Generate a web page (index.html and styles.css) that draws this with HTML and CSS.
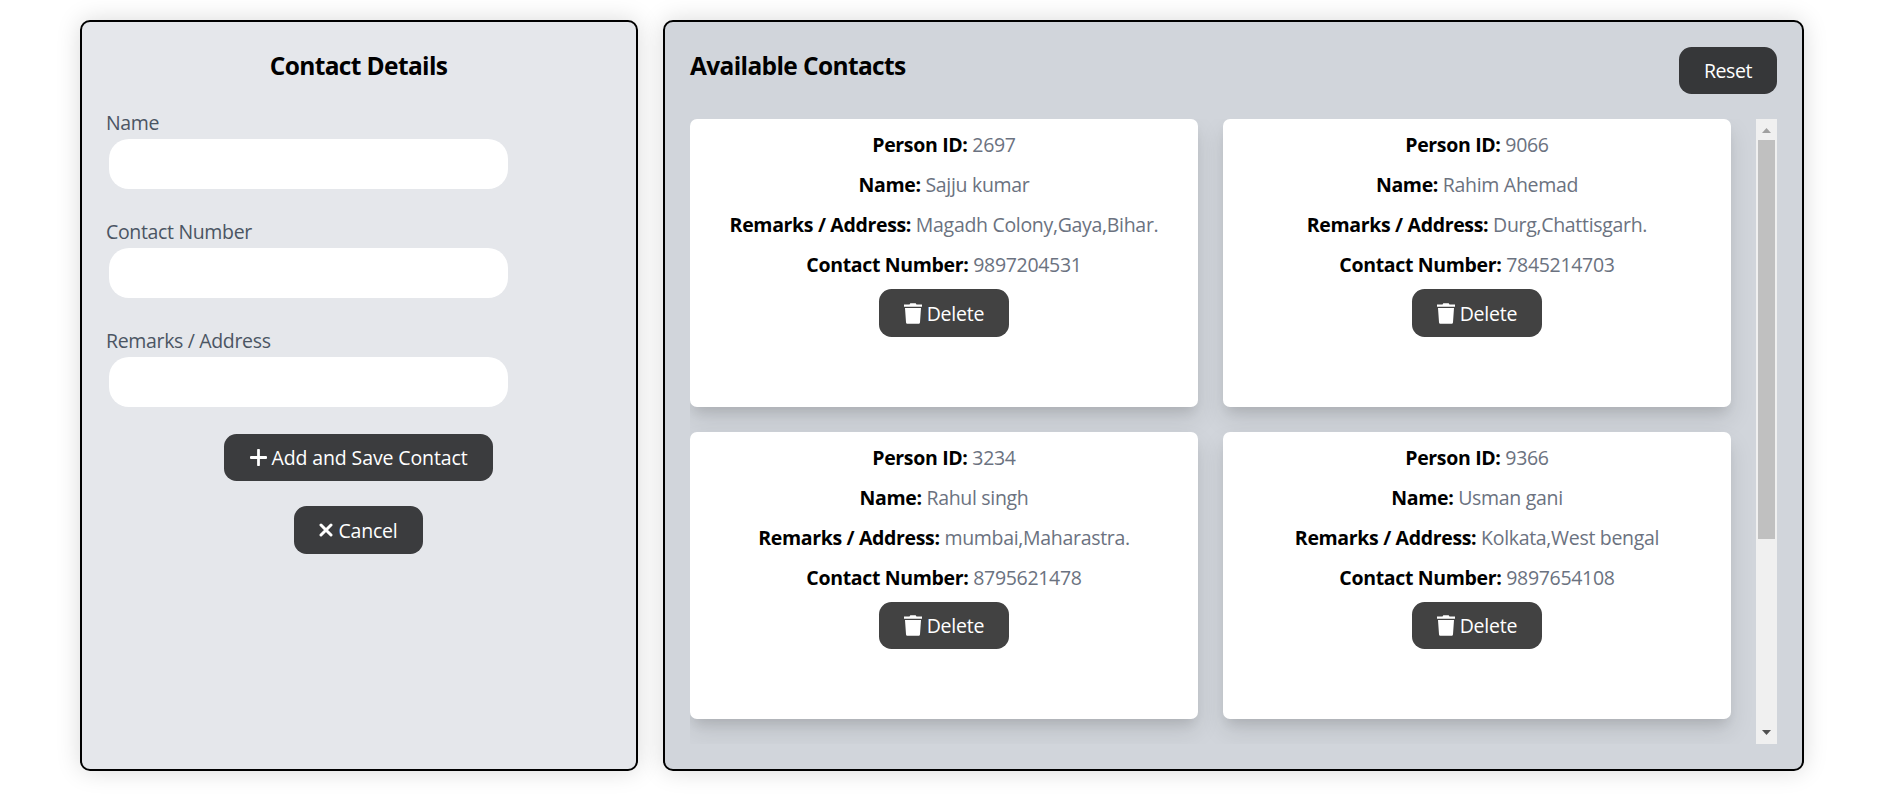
FILE: index.html
```html
<!DOCTYPE html>
<html lang="en">
<head>
<meta charset="utf-8">
<title>Contacts</title>
<link rel="stylesheet" href="styles.css">
</head>
<body>
<svg class="defs" aria-hidden="true">
  <symbol id="trash" viewBox="0 0 18 21"><path d="M0 1.500h5.500L6.300.3h5.400l.8 1.200H18V3.700H0zM1 5h16l-1 14.200c-.1 1-.7 1.600-1.700 1.600H3.700c-1 0-1.600-.6-1.700-1.600z"/></symbol>
</svg>
<main class="layout">
  <section class="panel panel-form">
    <h2 class="title title-center">Contact Details</h2>
    <form class="form">
      <div class="field"><label class="label label-name" for="name">Name</label><input class="input" id="name" type="text"></div>
      <div class="field"><label class="label" for="number">Contact Number</label><input class="input" id="number" type="text"></div>
      <div class="field"><label class="label" for="remarks">Remarks / Address</label><input class="input" id="remarks" type="text"></div>
      <button class="btn btn-add" type="button"><svg class="icon-plus" viewBox="0 0 16 16"><path d="M8 1v14M1 8h14"/></svg><span>Add and Save Contact</span></button>
      <button class="btn btn-cancel" type="button"><svg class="icon-x" viewBox="0 0 14 14"><path d="M2 2l10 10M12 2L2 12"/></svg><span>Cancel</span></button>
    </form>
  </section>
  <section class="panel panel-list">
    <header class="list-head">
      <h2 class="title">Available Contacts</h2>
      <button class="btn btn-reset" type="button"><span>Reset</span></button>
    </header>
    <div class="list-body">
      <div class="cards">
        <article class="card">
          <p class="line"><b>Person ID:</b> 2697</p>
          <p class="line"><b>Name:</b> Sajju kumar</p>
          <p class="line"><b>Remarks / Address:</b> Magadh Colony,Gaya,Bihar.</p>
          <p class="line"><b>Contact Number:</b> 9897204531</p>
          <button class="btn btn-delete" type="button"><svg class="icon-trash"><use href="#trash"/></svg><span>Delete</span></button>
        </article>
        <article class="card">
          <p class="line"><b>Person ID:</b> 9066</p>
          <p class="line"><b>Name:</b> Rahim Ahemad</p>
          <p class="line"><b>Remarks / Address:</b> Durg,Chattisgarh.</p>
          <p class="line"><b>Contact Number:</b> 7845214703</p>
          <button class="btn btn-delete" type="button"><svg class="icon-trash"><use href="#trash"/></svg><span>Delete</span></button>
        </article>
        <article class="card">
          <p class="line"><b>Person ID:</b> 3234</p>
          <p class="line"><b>Name:</b> Rahul singh</p>
          <p class="line"><b>Remarks / Address:</b> mumbai,Maharastra.</p>
          <p class="line"><b>Contact Number:</b> 8795621478</p>
          <button class="btn btn-delete btn-short" type="button"><svg class="icon-trash"><use href="#trash"/></svg><span>Delete</span></button>
        </article>
        <article class="card">
          <p class="line"><b>Person ID:</b> 9366</p>
          <p class="line"><b>Name:</b> Usman gani</p>
          <p class="line"><b>Remarks / Address:</b> Kolkata,West bengal</p>
          <p class="line"><b>Contact Number:</b> 9897654108</p>
          <button class="btn btn-delete btn-short" type="button"><svg class="icon-trash"><use href="#trash"/></svg><span>Delete</span></button>
        </article>
      </div>
      <div class="scrollbar">
        <svg class="arrow arrow-up" viewBox="0 0 9 5"><path d="M4.500 0L9 5H0z"/></svg>
        <div class="thumb"></div>
        <svg class="arrow arrow-down" viewBox="0 0 9 5"><path d="M0 0h9L4.500 5z"/></svg>
      </div>
    </div>
  </section>
</main>
</body>
</html>
```
FILE: styles.css
```css
* { box-sizing: border-box; margin: 0; }
body {
  height: 801px;
  overflow: hidden;
  background: #fff;
  color: #000;
  font: 19.5px/30px "Segoe UI", "Open Sans", "Noto Sans", sans-serif;
}
.defs { display: none; }
.layout {
  display: grid;
  grid-template-columns: 558px 1141px;
  gap: 25px;
  width: 1724px;
  height: 771px;
  margin-left: 80px;
  padding-top: 20px;
}
.panel {
  border: 2px solid #000;
  border-radius: 10px;
  padding: 25px;
  box-shadow: 0 0 25px rgba(0, 0, 0, .15);
}
.panel-form { background: #e5e7eb; padding-left: 24px; }
.panel-list { background: #d1d5db; }
.title {
  font-size: 24.5px;
  line-height: 35px;
  font-weight: 700;
  letter-spacing: -.63px;
  padding-top: 1px;
}
.title-center { text-align: center; }
.form {
  display: flex;
  flex-direction: column;
  align-items: center;
  padding-top: 25px;
}
.field {
  align-self: stretch;
  display: flex;
  flex-direction: column;
  height: 109px;
}
.label { color: #4b5563; height: 31px; line-height: 30px; letter-spacing: -.34px; }
.input {
  width: 399px;
  height: 50px;
  margin-left: 3px;
  border: 0;
  border-radius: 20px;
  background: #fff;
}
.btn {
  display: flex;
  align-items: center;
  justify-content: center;
  gap: 5px;
  flex: none;
  height: 47px;
  padding: 0;
  border: 0;
  border-radius: 12.500px;
  color: #fff;
  background: #3b3c3e;
  font: inherit;
  letter-spacing: -.2px;
  white-space: nowrap;
}
.btn-add { width: 269px; margin-top: -1px; letter-spacing: -.12px; }
.btn-cancel { width: 129px; height: 48px; margin-top: 25px; }
.btn-cancel span, .btn-delete span { padding-top: 1px; }
.btn-reset { width: 98px; background: #363739; letter-spacing: -.4px; }
.btn-delete { width: 130px; height: 48px; background: #424242; }
.btn-short { height: 47px; }
.icon-plus { width: 17px; height: 17px; fill: none; stroke: #fff; stroke-width: 2.600; stroke-linecap: round; }
.icon-x { width: 14px; height: 14px; fill: none; stroke: #fff; stroke-width: 3; stroke-linecap: round; }
.icon-trash { width: 18px; height: 21px; fill: #fff; }
.list-head { display: flex; justify-content: space-between; height: 72px; }
.list-body { display: flex; justify-content: space-between; height: 625px; }
.cards {
  display: grid;
  grid-template-columns: 508px 508px;
  grid-template-rows: 288px 287px;
  gap: 25px;
  width: 1066px;
  overflow: hidden;
}
.card {
  display: flex;
  flex-direction: column;
  align-items: center;
  padding-top: 10px;
  border-radius: 7px;
  background: #fff;
  box-shadow: 0 12px 25px rgba(0, 0, 0, .1), 0 8px 12px -4px rgba(0, 0, 0, .1);
}
.line { height: 40px; line-height: 32px; color: #6b7280; letter-spacing: -.31px; white-space: nowrap; }
.line b { color: #000; letter-spacing: -.34px; }
.scrollbar {
  display: flex;
  flex-direction: column;
  align-items: center;
  width: 21px;
  background: #f0f0f0;
}
.arrow { width: 9px; height: 5px; }
.arrow-up { margin: 9px 0 7px; fill: #a0a0a0; }
.arrow-down { margin-top: auto; margin-bottom: 9px; fill: #505050; }
.thumb { width: 17px; height: 399px; background: #c0c0c0; }
```
